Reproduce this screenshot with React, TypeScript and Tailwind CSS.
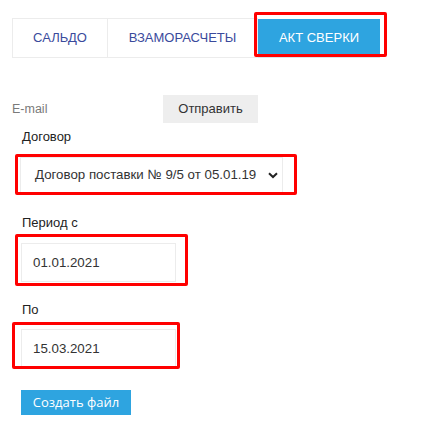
import React from "react";

export default function App() {
  return (
    <div className="relative w-[438px] h-[443px] bg-white font-['Liberation_Sans',Arial,sans-serif] text-[13px]">
      <div className="pt-[18px] pl-[12px]">
        {/* Tabs */}
        <div className="flex h-[40px]">
          <div className="w-[96px] border border-[#ececec] flex items-center justify-center text-[#3a4a9c] text-[13px]">САЛЬДО</div>
          <div className="w-[150px] border border-l-0 border-[#ececec] flex items-center justify-center text-[#3a4a9c] text-[13px]">ВЗАМОРАСЧЕТЫ</div>
          <div className="relative mt-[1px] w-[122px] h-[37px] bg-[#2ea4e0] shadow-[0_2px_0_#d7e3ea] flex items-center justify-center text-white text-[13px]">
            АКТ СВЕРКИ
            <div className="absolute left-[-4px] top-[-7px] w-[133px] h-[45px] border-[3px] border-[#f00] rounded-[2px]" />
          </div>
        </div>

        {/* E-mail row */}
        <div className="mt-[37px] flex items-center h-[28px]">
          <div className="w-[151px] text-[#7a7a7a] text-[12.5px]">E-mail</div>
          <div className="w-[95px] h-[28px] bg-[#eeeeee] flex items-center justify-center text-[#333]">Отправить</div>
        </div>

        {/* Договор */}
        <div className="mt-[6px] pl-[10px] h-[16px] leading-[16px] text-[#222]">Договор</div>
        <div className="relative mt-[12px] ml-[8px] w-[263px] h-[36px] border border-[#ececec] flex items-center justify-between pl-[14px] pr-[4px] text-[#333] text-[13.3px]">
          <span>Договор поставки № 9/5 от 05.01.19</span>
          <svg width="10" height="7" viewBox="0 0 10 7">
            <path d="M1 1.2 L5 5 L9 1.2" fill="none" stroke="#222" strokeWidth="2" />
          </svg>
          <div className="absolute left-[-6px] top-[-4px] w-[282px] h-[41px] border-[3px] border-[#f00] rounded-[2px]" />
        </div>

        {/* Period */}
        <div className="mt-[22px] pl-[10px] h-[16px] leading-[16px] text-[#222]">Период с</div>
        <div className="relative mt-[12px] ml-[9px] w-[155px] h-[39px] border border-[#ececec] flex items-center pl-[11px] text-[#333] text-[13.3px]">
          01.01.2021
          <div className="absolute left-[-7px] top-[-10px] w-[173px] h-[52px] border-[3px] border-[#f00] rounded-[2px]" />
        </div>

        {/* По */}
        <div className="mt-[20px] pl-[10px] h-[16px] leading-[16px] text-[#222]">По</div>
        <div className="relative mt-[11px] ml-[9px] w-[155px] h-[38px] border border-[#ececec] border-b-0 flex items-center pl-[11px] text-[#333] text-[13.3px]">
          15.03.2021
          <div className="absolute left-[-10px] top-[-8px] w-[168px] h-[47px] border-[3px] border-[#f00] rounded-[2px]" />
        </div>

        {/* Button */}
        <div className="mt-[23px] ml-[9px] w-[110px] h-[25px] bg-[#2ea4e0] flex items-center justify-center text-white text-[13px] font-['Open_Sans',sans-serif]">
          Создать файл
        </div>
      </div>
    </div>
  );
}
